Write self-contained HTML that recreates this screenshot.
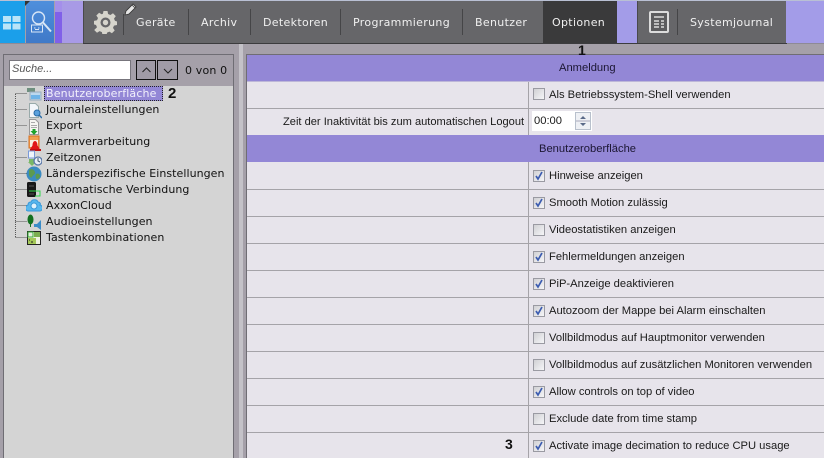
<!DOCTYPE html>
<html><head><meta charset="utf-8">
<style>
html,body{margin:0;padding:0}
body{width:824px;height:458px;overflow:hidden;position:relative;background:#a5a0a9;font-family:"Liberation Sans",sans-serif}
.a{position:absolute}
.nav{position:absolute;top:16px;font:11px/14px "DejaVu Sans",sans-serif;color:#f0f0f0;letter-spacing:.33px;white-space:nowrap}
.sep{position:absolute;top:9px;width:1px;height:26px;background:#454547}
.row{position:absolute;left:247px;width:577px;height:1px;background:#a5a3a8}
.hdr{position:absolute;left:247px;width:577px;height:26px;background:#9387d6}
.ht{position:absolute;color:#1c1733;font-size:11.2px;line-height:14px;white-space:nowrap}
.lbl{position:absolute;left:549px;font-size:11.2px;line-height:14px;color:#1a1a1a;white-space:nowrap}
.cb{position:absolute;left:533px;width:10px;height:10px;border:1px solid #9a9aa2;background:linear-gradient(135deg,#d0d0d4,#f6f6f8)}
.cb svg{position:absolute;left:0;top:0}
.t{position:absolute;left:46px;font:11px/14px "DejaVu Sans",sans-serif;color:#111;letter-spacing:.05px;white-space:nowrap}
.ic{position:absolute;left:26px;width:16px;height:16px}
</style></head><body>
<!-- top bar -->
<div class="a" style="left:0;top:0;width:824px;height:1px;background:#b9c0d4"></div>
<div class="a" style="left:0;top:1px;width:25px;height:42px;background:#1b9fea"></div>
<div class="a" style="left:26px;top:1px;width:28px;height:42px;background:linear-gradient(#4f8fdc,#3f79c8)"></div>
<div class="a" style="left:25px;top:1px;width:5px;height:5px;background:#333;clip-path:polygon(0 0,100% 0,0 100%)"></div>
<div class="a" style="left:55px;top:1px;width:7px;height:11px;background:#a48fea"></div>
<div class="a" style="left:55px;top:12px;width:7px;height:31px;background:#8060e8"></div>
<div class="a" style="left:62px;top:1px;width:21px;height:42px;background:#a89ae6"></div>
<div class="a" style="left:83px;top:1px;width:460px;height:42px;background:#666669;border-left:1px solid #49494b"></div>
<div class="a" style="left:543px;top:1px;width:74px;height:42px;background:#3a3a3b"></div>
<div class="a" style="left:617px;top:1px;width:20px;height:42px;background:#a39ce8"></div>
<div class="a" style="left:637px;top:1px;width:149px;height:42px;background:#666669;border-left:1px solid #49494b;box-sizing:border-box"></div>
<div class="a" style="left:786px;top:1px;width:38px;height:42px;background:#a39ce8"></div>
<div class="a" style="left:83px;top:43px;width:704px;height:1px;background:#3c3c3e"></div>
<div class="a" style="left:0;top:43px;width:83px;height:1px;background:#8e8a96"></div>
<div class="a" style="left:787px;top:43px;width:37px;height:1px;background:#8e8a96"></div>
<!-- windows tile -->
<svg class="a" style="left:3px;top:16px" width="18" height="14"><rect width="8" height="6" fill="#b9e4f8"/><rect x="9.500" width="8" height="6" fill="#b9e4f8"/><rect y="7.500" width="8" height="6" fill="#b9e4f8"/><rect x="9.500" y="7.500" width="8" height="6" fill="#b9e4f8"/></svg>
<!-- search tile -->
<svg class="a" style="left:30px;top:11px" width="23" height="23" fill="none" stroke="#d8e6f6"><circle cx="8.500" cy="7" r="6" stroke-width="1.400"/><path d="M13 11.500L21 20.500" stroke-width="2"/><rect x="1.500" y="14" width="11" height="7" stroke-width="1"/><path d="M4 17h1.500M8 17h1.500M5 18.500h4" stroke-width="1"/></svg>
<!-- gear -->
<svg class="a" style="left:94px;top:11px" width="23" height="23" viewBox="0 0 23 23"><path fill="#d6d4cc" fill-rule="evenodd" d="M9.500 0h4l.6 3 2.300 1 2.600-1.700 2.800 2.800L20 7.600l1 2.300 2 .6v3.500l-3 .6-1 2.300 1.700 2.600-2.800 2.800-2.500-1.700-2.300 1-.6 2.400h-4l-.6-2.900-2.300-1-2.600 1.700-2.800-2.800L3 16.300l-1-2.300-2-.6V9.900l3-.6 1-2.300L2.300 4.500l2.800-2.800L7.600 3.300l1.300-.5zM11.500 6.500a5 5 0 1 0 0 10 5 5 0 0 0 0-10z"/><circle cx="11.500" cy="11.500" r="2.700" fill="#d6d4cc"/></svg>
<!-- pencil -->
<svg class="a" style="left:124px;top:2px" width="14" height="14"><path d="M1 13l1-4 7-7 3 3-7 7z" fill="#e6e6e6" stroke="#333" stroke-width=".8"/><path d="M8 3l3 3" stroke="#333" stroke-width=".7"/></svg>
<div class="sep" style="left:123px;top:14px;height:21px"></div>
<span class="nav" style="left:136px">Geräte</span>
<div class="sep" style="left:188px"></div>
<span class="nav" style="left:201px">Archiv</span>
<div class="sep" style="left:250px"></div>
<span class="nav" style="left:263px">Detektoren</span>
<div class="sep" style="left:340px"></div>
<span class="nav" style="left:353px">Programmierung</span>
<div class="sep" style="left:462px"></div>
<span class="nav" style="left:475px">Benutzer</span>
<span class="nav" style="left:552px">Optionen</span>
<svg class="a" style="left:649px;top:11px" width="20" height="22"><rect x="1" y="1" width="18" height="20" rx="1" fill="#5c5c5e" stroke="#dcdcdc" stroke-width="2"/><path d="M5 6h10M5 10h5M12 10h3M5 13h5M12 13h3M5 16h5M12 16h3" stroke="#dcdcdc" stroke-width="1.500"/></svg>
<div class="sep" style="left:677px"></div>
<span class="nav" style="left:690px">Systemjournal</span>

<!-- left panel -->
<div class="a" style="left:3px;top:54px;width:231px;height:404px;box-sizing:border-box;border:1px solid #6f6d74;border-bottom:0;background:#a5a0a9"></div>
<div class="a" style="left:4px;top:86px;width:229px;height:372px;background:#d4d4d4"></div>
<div class="a" style="left:9px;top:60px;width:122px;height:20px;box-sizing:border-box;background:#fff;border:1px solid #77757c;font:italic 11px/17px 'Liberation Sans',sans-serif;color:#555;padding-left:2px">Suche...</div>
<div class="a" style="left:136px;top:60px;width:20px;height:20px;box-sizing:border-box;border:1px solid #111;background:#a09ba6"></div>
<div class="a" style="left:157px;top:60px;width:21px;height:20px;box-sizing:border-box;border:1px solid #111;background:#a09ba6"></div>
<svg class="a" style="left:136px;top:60px" width="42" height="20" fill="none" stroke="#222"><path d="M6.500 12l4-4 4 4M28 9l4 4 4-4"/></svg>
<div class="a" style="left:185px;top:64px;font:11px/14px 'DejaVu Sans',sans-serif;color:#111;white-space:nowrap;letter-spacing:.15px">0 von 0</div>
<div class="a" style="left:239px;top:44px;width:4px;height:414px;background:#c4c2c8"></div>
<div class="a" style="left:246px;top:54px;width:578px;height:404px;background:#e7e4eb;border-top:1px solid #6f6d74;border-left:1px solid #6f6d74;box-sizing:border-box"></div>

<!-- tree -->
<svg class="a" style="left:10px;top:86px" width="20" height="160" stroke="#555" stroke-dasharray="1 1" fill="none"><path d="M5.500 8V151.500M5.500 7.500H17M5.500 23.500H17M5.500 39.500H17M5.500 55.500H17M5.500 71.500H17M5.500 87.500H17M5.500 103.500H17M5.500 119.500H17M5.500 135.500H17M5.500 151.500H17"/></svg>
<div class="a" style="left:44px;top:86px;width:119px;height:15px;box-sizing:border-box;background:#9387d6;border:1px dotted #222"></div>
<span class="t" style="top:87px;color:#f2f0fb;letter-spacing:.15px">Benutzeroberfläche</span>
<span class="t" style="top:103px">Journaleinstellungen</span>
<span class="t" style="top:119px">Export</span>
<span class="t" style="top:135px">Alarmverarbeitung</span>
<span class="t" style="top:151px">Zeitzonen</span>
<span class="t" style="top:167px">Länderspezifische Einstellungen</span>
<span class="t" style="top:183px">Automatische Verbindung</span>
<span class="t" style="top:199px">AxxonCloud</span>
<span class="t" style="top:215px">Audioeinstellungen</span>
<span class="t" style="top:231px">Tastenkombinationen</span>
<div class="a" style="left:168px;top:86px;font:bold 15px/16px 'Liberation Sans',sans-serif;color:#111">2</div>

<svg class="ic" style="top:87px" viewBox="0 0 16 16"><rect x="1" y="1" width="8" height="4" fill="#6f8f7f"/><rect x="4" y="5" width="11" height="8" fill="#bcd8ee" stroke="#9ab"/><rect x="5" y="8" width="9" height="4" fill="#6fb4e8"/></svg>
<svg class="ic" style="top:103px" viewBox="0 0 16 16"><path d="M3.500 0.500h6l3 3v11h-9z" fill="#f4f6fa" stroke="#9aa"/><circle cx="11" cy="10" r="3" fill="#5aa0dc" stroke="#2a6ca8"/><path d="M13 12l3 3" stroke="#2a6ca8" stroke-width="1.500"/></svg>
<svg class="ic" style="top:119px" viewBox="0 0 16 16"><path d="M3.500 .5h6l3 3v12h-9z" fill="#f6f6f2" stroke="#999"/><path d="M5 3.500h4M5 6.500h6M5 8.500h6" stroke="#aaa"/><path d="M6.500 10h3v2h2l-3.500 4-3.500-4h2z" fill="#1fa32c"/></svg>
<svg class="ic" style="top:135px" viewBox="0 0 16 16"><rect x="3" y="1" width="10" height="12" fill="#f0a050" stroke="#d87020"/><rect x="4" y="5" width="8" height="7" fill="#f8f0e0"/><path d="M9 6c1.500 0 2.500 2 2.500 4.500l2 3v.5h-9v-.5l2-3C6.500 8 7.500 6 9 6z" fill="#e01818"/><rect x="4" y="14" width="11" height="2" fill="#c01010"/></svg>
<svg class="ic" style="top:150px" viewBox="0 0 16 16"><path d="M2.500 1h6v7h-6z" fill="#f0f4fa" stroke="#7a9ad8"/><path d="M3 9h5v3h2l-4 4-4-4h1z" fill="#7ab868"/><circle cx="12" cy="11" r="4" fill="#e8eef8" stroke="#5a78a8" stroke-width="1.300"/><path d="M12 8v3l2 1" stroke="#456" fill="none"/></svg>
<svg class="ic" style="top:166px" viewBox="0 0 16 16"><circle cx="8" cy="8" r="7.500" fill="#3a8ac0"/><path d="M3 4c3-2 5 0 6 2s-2 3-3 5-3-1-3-3zM10 8c2-1 4 0 4 2s-2 3-3 3-2-3-1-5z" fill="#5c9a50"/></svg>
<svg class="ic" style="top:182px" viewBox="0 0 16 16"><rect x="1" y="0" width="9" height="15" rx="1.500" fill="#181818"/><path d="M3 4h5M3 12h5" stroke="#555"/><path d="M8 9h6v5H9" stroke="#2fd84a" fill="none"/><path d="M3 9h5" stroke="#2fd84a"/></svg>
<svg class="ic" style="top:197px" viewBox="0 0 16 16"><path d="M3 14a3 3 0 0 1-1-6c0-2 1-3 3-3 1-3 6-3 7 0 2 0 3 2 2 3a3 3 0 0 1-1 6z" fill="#58b8ee" stroke="#3a98d8"/><circle cx="8" cy="9" r="3" fill="#dff2fc" stroke="#3a98d8"/></svg>
<svg class="ic" style="top:214px" viewBox="0 0 16 16"><ellipse cx="4.500" cy="5.500" rx="3" ry="5" fill="#12701f"/><path d="M4.500 10v3" stroke="#12701f"/><path d="M8 10h3l4-4v10l-4-3H8z" fill="#3a8cc8"/></svg>
<svg class="ic" style="top:230px" viewBox="0 0 16 16"><rect x="1.500" y="1.500" width="13" height="13" fill="#f0f4e0" stroke="#222"/><rect x="2" y="2" width="5" height="5" fill="#e8eee0" stroke="#3a3"/><rect x="8" y="2" width="6" height="5" fill="#7cae50"/><rect x="2" y="8" width="8" height="6" fill="#a4c858"/><path d="M3 10h1M5 12h2" stroke="#222"/></svg>

<!-- right table -->
<div class="hdr" style="top:55px"></div>
<div class="hdr" style="top:135px;height:27px"></div>
<span class="ht" style="left:559px;top:61px">Anmeldung</span>
<span class="ht" style="left:539px;top:142px">Benutzeroberfläche</span>
<div class="a" style="left:578px;top:44px;font:bold 14px/13px 'Liberation Sans',sans-serif;color:#111">1</div>
<div class="a" style="left:247px;top:81px;width:577px;height:1px;background:#bdb7d8"></div>
<div class="row" style="top:108px"></div>
<div class="row" style="top:189px"></div>
<div class="row" style="top:216px"></div>
<div class="row" style="top:243px"></div>
<div class="row" style="top:270px"></div>
<div class="row" style="top:297px"></div>
<div class="row" style="top:324px"></div>
<div class="row" style="top:351px"></div>
<div class="row" style="top:378px"></div>
<div class="row" style="top:405px"></div>
<div class="row" style="top:432px"></div>
<div class="a" style="left:528px;top:82px;width:1px;height:53px;background:#a5a3a8"></div>
<div class="a" style="left:528px;top:162px;width:1px;height:296px;background:#a5a3a8"></div>

<div class="cb" style="top:88px"></div>
<span class="lbl" style="top:88px">Als Betriebssystem-Shell verwenden</span>
<span class="a" style="left:283px;top:115px;font-size:11.1px;line-height:14px;color:#1a1a1a;white-space:nowrap">Zeit der Inaktivität bis zum automatischen Logout</span>
<div class="a" style="left:532px;top:111px;width:60px;height:20px;background:#fff;font-size:11.2px;line-height:20px;color:#1a1a1a;padding-left:2px;box-sizing:border-box">00:00</div>
<svg class="a" style="left:575px;top:112px" width="16" height="18"><rect x=".5" y=".5" width="15" height="17" fill="#eef0f4" stroke="#b8c0cc"/><path d="M1 9h14" stroke="#aab"/><path d="M8 4l-3 3h6zM8 14l-3-3h6z" fill="#5a6a88"/></svg>

<div class="cb" style="top:170px"><svg width="10" height="10"><path d="M2 5l2 3 4-7" stroke="#3c5cb0" stroke-width="1.700" fill="none"/></svg></div>
<span class="lbl" style="top:169px">Hinweise anzeigen</span>
<div class="cb" style="top:197px"><svg width="10" height="10"><path d="M2 5l2 3 4-7" stroke="#3c5cb0" stroke-width="1.700" fill="none"/></svg></div>
<span class="lbl" style="top:196px">Smooth Motion zulässig</span>
<div class="cb" style="top:224px"></div>
<span class="lbl" style="top:223px">Videostatistiken anzeigen</span>
<div class="cb" style="top:251px"><svg width="10" height="10"><path d="M2 5l2 3 4-7" stroke="#3c5cb0" stroke-width="1.700" fill="none"/></svg></div>
<span class="lbl" style="top:250px">Fehlermeldungen anzeigen</span>
<div class="cb" style="top:278px"><svg width="10" height="10"><path d="M2 5l2 3 4-7" stroke="#3c5cb0" stroke-width="1.700" fill="none"/></svg></div>
<span class="lbl" style="top:277px">PiP-Anzeige deaktivieren</span>
<div class="cb" style="top:305px"><svg width="10" height="10"><path d="M2 5l2 3 4-7" stroke="#3c5cb0" stroke-width="1.700" fill="none"/></svg></div>
<span class="lbl" style="top:304px">Autozoom der Mappe bei Alarm einschalten</span>
<div class="cb" style="top:332px"></div>
<span class="lbl" style="top:331px">Vollbildmodus auf Hauptmonitor verwenden</span>
<div class="cb" style="top:359px"></div>
<span class="lbl" style="top:358px">Vollbildmodus auf zusätzlichen Monitoren verwenden</span>
<div class="cb" style="top:386px"><svg width="10" height="10"><path d="M2 5l2 3 4-7" stroke="#3c5cb0" stroke-width="1.700" fill="none"/></svg></div>
<span class="lbl" style="top:385px">Allow controls on top of video</span>
<div class="cb" style="top:413px"></div>
<span class="lbl" style="top:412px">Exclude date from time stamp</span>
<div class="cb" style="top:440px"><svg width="10" height="10"><path d="M2 5l2 3 4-7" stroke="#3c5cb0" stroke-width="1.700" fill="none"/></svg></div>
<span class="lbl" style="top:439px">Activate image decimation to reduce CPU usage</span>
<div class="a" style="left:505px;top:437px;font:bold 14px/15px 'Liberation Sans',sans-serif;color:#111">3</div>
</body></html>
